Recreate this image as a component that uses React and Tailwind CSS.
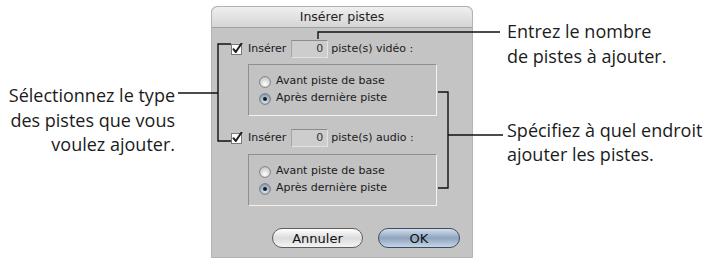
import React from "react";

const Checkbox = () => (
  <svg width="12" height="12" viewBox="0 0 12 12" className="shrink-0">
    <rect x="0.5" y="1.5" width="10" height="10" fill="#ffffff" stroke="#7a7a7a" />
    <path d="M2.5 6.2 L4.8 9 L10.5 0.5" fill="none" stroke="#1f1f1f" strokeWidth="2" strokeLinecap="round" strokeLinejoin="round" />
  </svg>
);

const Radio = ({ on }) => (
  <svg width="12" height="12" viewBox="0 0 12 12" className="shrink-0">
    <defs>
      <radialGradient id={on ? "rg-on" : "rg-off"} cx="50%" cy="70%" r="60%">
        <stop offset="0%" stopColor={on ? "#dbe6f2" : "#ffffff"} />
        <stop offset="100%" stopColor={on ? "#8aa0bb" : "#c9c9c9"} />
      </radialGradient>
    </defs>
    <circle cx="6" cy="6" r="5.4" fill={`url(#${on ? "rg-on" : "rg-off"})`} stroke="#6f6f6f" strokeWidth="0.8" />
    {on && <circle cx="6" cy="6" r="2" fill="#1c1c1c" />}
  </svg>
);

const TrackRow = ({ kind }) => (
  <div className="flex items-center h-[18px] text-[11px] text-[#1a1a1a]">
    <Checkbox />
    <span className="ml-[5px]">Insérer</span>
    <div className="ml-[5px] w-[37px] h-[18px] bg-[#cdcdcd] border-t border-l border-t-[#8c8c8c] border-l-[#a5a5a5] border-r border-b border-r-[#e2e2e2] border-b-[#e2e2e2] flex items-center justify-end pr-[4px] text-[#333]">
      0
    </div>
    <span className="ml-[3px]">piste(s) {kind} :</span>
  </div>
);

const PlacementBox = () => (
  <div className="ml-[17px] w-[189px] h-[52px] border border-t-[#8f8f8f] border-l-[#8f8f8f] border-r-[#f2f2f2] border-b-[#f2f2f2] bg-[#c2c2c2] pl-[10px] pt-[8px] text-[11px] text-[#1a1a1a]">
    <div className="flex items-center h-[17px] gap-[5px]">
      <Radio />
      <span>Avant piste de base</span>
    </div>
    <div className="flex items-center h-[17px] gap-[5px]">
      <Radio on />
      <span>Après dernière piste</span>
    </div>
  </div>
);

export default function App() {
  return (
    <div className="relative w-[709px] h-[262px] bg-white flex overflow-hidden">
      {/* Légende gauche */}
      <div className="w-[211px] pr-[36px] pt-[83px] text-right text-[18px] leading-[24.5px] text-[#1b1b1b] font-['Open_Sans',sans-serif]">
        Sélectionnez le type
        <br />
        des pistes que vous
        <br />
        voulez ajouter.
      </div>

      {/* Boîte de dialogue */}
      <div className="mt-[6px] w-[262px] h-[252px] flex flex-col bg-[#c4c4c4] rounded-t-[6px] border border-[#b3b3b3] font-['DejaVu_Sans',sans-serif]">
        <div className="h-[21px] shrink-0 rounded-t-[6px] bg-gradient-to-b from-[#efefef] to-[#d5d5d5] border-b border-[#a2a2a2] flex items-center justify-center text-[12.5px] text-[#222]">
          Insérer pistes
        </div>
        <div className="flex flex-col pl-[19px]">
          <div className="mt-[12px]">
            <TrackRow kind="vidéo" />
          </div>
          <div className="mt-[6px]">
            <PlacementBox />
          </div>
          <div className="mt-[13px]">
            <TrackRow kind="audio" />
          </div>
          <div className="mt-[7px]">
            <PlacementBox />
          </div>
          <div className="mt-[22px] ml-[41px] flex gap-[15px] text-[13px] text-[#111]">
            <button className="w-[91px] h-[20px] rounded-full border border-[#5e5e5e] bg-gradient-to-b from-[#ffffff] via-[#dcdcdc] to-[#f4f4f4] leading-none">
              Annuler
            </button>
            <button className="w-[82px] h-[20px] rounded-full border border-[#3e4e62] bg-gradient-to-b from-[#d4dfec] via-[#8fa4bf] to-[#c6d5e6] leading-none">
              OK
            </button>
          </div>
        </div>
      </div>

      {/* Légendes droite */}
      <div className="pl-[34px] text-[18px] leading-[25px] text-[#1b1b1b] font-['Open_Sans',sans-serif]">
        <div className="mt-[19px]">
          Entrez le nombre
          <br />
          de pistes à ajouter.
        </div>
        <div className="mt-[49px] leading-[24px]">
          Spécifiez à quel endroit
          <br />
          ajouter les pistes.
        </div>
      </div>

      {/* Traits de rappel */}
      <svg className="absolute inset-0 pointer-events-none" width="709" height="262" viewBox="0 0 709 262">
        <g fill="none" stroke="#111" strokeWidth="1.4">
          <path d="M318 39 V32 H500" />
          <path d="M178 93 H218" />
          <path d="M231 44 H218 V141 H231" />
          <path d="M438 92 H448 V188 H438" />
          <path d="M448 135 H503" />
        </g>
      </svg>
    </div>
  );
}
